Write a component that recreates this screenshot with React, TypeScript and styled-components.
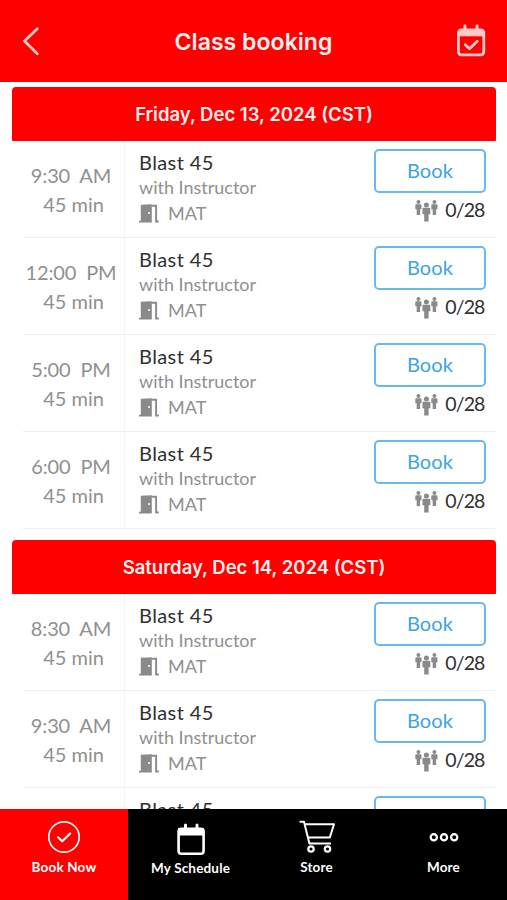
import React from 'react';
import styled, { createGlobalStyle } from 'styled-components';

const GlobalStyle = createGlobalStyle`
  * { box-sizing: border-box; }
  body { margin: 0; background: #fff; overflow: hidden; }
`;

const Screen = styled.div`
  width: 507px;
  height: 900px;
  display: flex;
  flex-direction: column;
  overflow: hidden;
  background: #fff;
  font-family: Lato, 'Noto Sans', sans-serif;
`;

const Header = styled.header`
  flex: none;
  height: 82px;
  display: grid;
  grid-template-columns: 72px 1fr 72px;
  align-items: center;
  background: #fe0000;
`;

const HeaderTitle = styled.h1`
  margin: 1px 0 0;
  text-align: center;
  white-space: nowrap;
  color: #fff0f0;
  font: 600 23px/30px Inter, sans-serif;
  letter-spacing: 0.05px;
`;

const IconButton = styled.button`
  display: flex;
  justify-content: flex-start;
  padding: 0;
  border: 0;
  background: none;
`;

const List = styled.main`
  flex: 1;
  min-height: 0;
  overflow: hidden;
  padding: 5px 11px 0 12px;
`;

const Day = styled.section`
  & + & { margin-top: 11px; }
`;

const DateBar = styled.h2`
  height: 54px;
  margin: 0;
  border-radius: 4px 4px 1px 1px;
  background: #fe0000;
  color: #fff0f0;
  text-align: center;
  white-space: nowrap;
  font: 600 18.5px/55px Inter, sans-serif;
  letter-spacing: 0px;
`;

const Row = styled.article`
  height: 97px;
  display: grid;
  grid-template-columns: 102px 1fr 112px;
  margin-left: 11px;
  padding-right: 10px;
  border-bottom: 1px solid #eceeef;
`;

const Time = styled.div`
  padding-top: 20px;
  padding-right: 5px;
  border-right: 1px solid #f3f4f5;
  text-align: center;
  color: #909090;
  font-size: 20px;
  line-height: 29px;
  white-space: nowrap;
`;

const Clock = styled.div`
  word-spacing: 5px;
  letter-spacing: -0.15px;
`;

const Duration = styled.div`
  padding-left: 5px;
`;

const Details = styled.div`
  padding: 8px 0 0 14px;
`;

const ClassName = styled.div`
  color: #303030;
  font-size: 20px;
  line-height: 26px;
  letter-spacing: 0.4px;
`;

const Teacher = styled.div`
  color: #909090;
  font-size: 18px;
  line-height: 25px;
`;

const Room = styled.div`
  display: flex;
  align-items: center;
  gap: 9px;
  color: #909090;
  font-size: 18px;
  line-height: 26px;
`;

const Actions = styled.div`
  padding-top: 8px;
`;

const BookButton = styled.button`
  display: block;
  width: 112px;
  height: 44px;
  padding: 0 0 2px;
  border: 2px solid #6bb8ea;
  border-radius: 5px;
  background: #fff;
  color: #3ca3e4;
  font: 400 20px/36px Lato, sans-serif;
  letter-spacing: 0.1px;
`;

const Capacity = styled.div`
  display: flex;
  justify-content: flex-end;
  align-items: center;
  gap: 7px;
  margin-top: 3px;
  padding-right: 1.5px;
  color: #303030;
  font-size: 19.5px;
  line-height: 28px;
  letter-spacing: -0.9px;
`;

const TabBar = styled.nav`
  flex: none;
  height: 91px;
  display: grid;
  grid-template-columns: 128px 125px 1fr 1fr;
  background: #000;
`;

const Tab = styled.div<{ $active?: boolean; $drop?: number }>`
  display: flex;
  flex-direction: column;
  align-items: center;
  padding-top: ${p => 10 + (p.$drop ?? 0)}px;
  background: ${p => (p.$active ? '#fe0000' : '#000')};
  color: #fff;
  font-size: 13.5px;
  font-weight: 700;
  line-height: 18px;
  letter-spacing: 0.17px;
  white-space: nowrap;
  svg { margin-bottom: 3px; }
`;

const BackIcon = () => (
  <svg width="40" height="32" viewBox="0 0 40 32" fill="none" stroke="#ffcaca" strokeWidth="2.8" strokeLinecap="round" strokeLinejoin="round">
    <path d="M37.3 3.7 24.5 16 37.3 28.7" />
  </svg>
);

const BookedIcon = () => (
  <svg width="52" height="34" viewBox="0 0 52 34" fill="none">
    <path d="M29.9 1.8v4M42.1 1.8v4" stroke="#ffcaca" strokeWidth="3" strokeLinecap="round" />
    <rect x="23.4" y="5.8" width="25.4" height="25" rx="3" stroke="#ffcaca" strokeWidth="2.8" />
    <path d="M23 6h26v6.3H23z" fill="#ffcaca" />
    <path d="m30.3 20.8 4.2 4 7.7-7.6" stroke="#ffcaca" strokeWidth="2.8" strokeLinecap="round" strokeLinejoin="round" />
  </svg>
);

const DoorIcon = () => (
  <svg width="20" height="19" viewBox="0 0 20 19">
    <path fillRule="evenodd" d="M1.8.8 12.8.2v18.3H0v-1.7h1.8zM10 7.9a1 1 0 1 0 0 2 1 1 0 0 0 0-2z" fill="#8a8a8a" />
    <path d="M12.5 1.8h4.6v15.7h2.7" fill="none" stroke="#8a8a8a" strokeWidth="1.9" />
  </svg>
);

const Person = ({ x, y, s }: { x: number; y: number; s: number }) => (
  <g transform={`translate(${x} ${y}) scale(${s})`}>
    <circle cx="0" cy="2.3" r="2.3" />
    <path d="M-2.5 4.8h5Q3.6 4.8 3.6 6v4.8H2V17.4h-4v-6.6h-1.6V6Q-3.6 4.8-2.5 4.8z" />
  </g>
);

const PeopleIcon = () => (
  <svg width="23" height="23" viewBox="0 0 23 23" fill="#8a8a8a">
    <Person x={3.4} y={1} s={0.86} />
    <Person x={19.4} y={1} s={0.86} />
    <Person x={11.4} y={3.4} s={1.1} />
  </svg>
);

const CheckCircleIcon = () => (
  <svg width="34" height="36" viewBox="0 0 34 36" fill="none" stroke="#fff" strokeLinecap="round" strokeLinejoin="round">
    <circle cx="17" cy="18" r="15.2" strokeWidth="1.7" />
    <path d="m11 18.2 4.2 4 8-7.8" strokeWidth="2.1" />
  </svg>
);

const CalendarIcon = () => (
  <svg width="28" height="36" viewBox="0 0 28 36" fill="none" stroke="#fff">
    <path d="M8.5 5v4M20 5v4" strokeWidth="3" strokeLinecap="round" />
    <rect x="1.6" y="8.8" width="25" height="25" rx="2.8" strokeWidth="2.6" />
    <path d="M1.5 8.5h25V15h-25z" fill="#fff" strokeWidth="1" />
  </svg>
);

const CartIcon = () => (
  <svg width="36" height="36" viewBox="0 0 36 36" fill="none" stroke="#fff" strokeWidth="2" strokeLinejoin="round">
    <path d="M.5 2.8H5l5.4 21.7H32M6.2 5.2H35l-4.2 13.3H9" />
    <circle cx="12" cy="30" r="2.7" strokeWidth="2.2" />
    <circle cx="28.5" cy="30" r="2.7" strokeWidth="2.2" />
  </svg>
);

const MoreIcon = () => (
  <svg width="30" height="36" viewBox="0 0 30 36" fill="none" stroke="#fff" strokeWidth="2.3">
    <circle cx="4.8" cy="18.2" r="3.1" />
    <circle cx="15" cy="18.2" r="3.1" />
    <circle cx="25.2" cy="18.2" r="3.1" />
  </svg>
);

const days = [
  { date: 'Friday, Dec 13, 2024 (CST)', times: ['9:30 AM', '12:00 PM', '5:00 PM', '6:00 PM'] },
  { date: 'Saturday, Dec 14, 2024 (CST)', times: ['8:30 AM', '9:30 AM', '10:30 AM'] },
];

const ClassRow = ({ time }: { time: string }) => (
  <Row>
    <Time>
      <Clock>{time}</Clock>
      <Duration>45 min</Duration>
    </Time>
    <Details>
      <ClassName>Blast 45</ClassName>
      <Teacher>with Instructor</Teacher>
      <Room><DoorIcon />MAT</Room>
    </Details>
    <Actions>
      <BookButton>Book</BookButton>
      <Capacity><PeopleIcon />0/28</Capacity>
    </Actions>
  </Row>
);

export default function App() {
  return (
    <Screen>
      <GlobalStyle />
      <Header>
        <IconButton aria-label="Back"><BackIcon /></IconButton>
        <HeaderTitle>Class booking</HeaderTitle>
        <IconButton aria-label="Booked classes"><BookedIcon /></IconButton>
      </Header>
      <List>
        {days.map(day => (
          <Day key={day.date}>
            <DateBar>{day.date}</DateBar>
            {day.times.map(time => <ClassRow key={time} time={time} />)}
          </Day>
        ))}
      </List>
      <TabBar>
        <Tab $active><CheckCircleIcon />Book Now</Tab>
        <Tab $drop={1}><CalendarIcon />My Schedule</Tab>
        <Tab><CartIcon />Store</Tab>
        <Tab><MoreIcon />More</Tab>
      </TabBar>
    </Screen>
  );
}
